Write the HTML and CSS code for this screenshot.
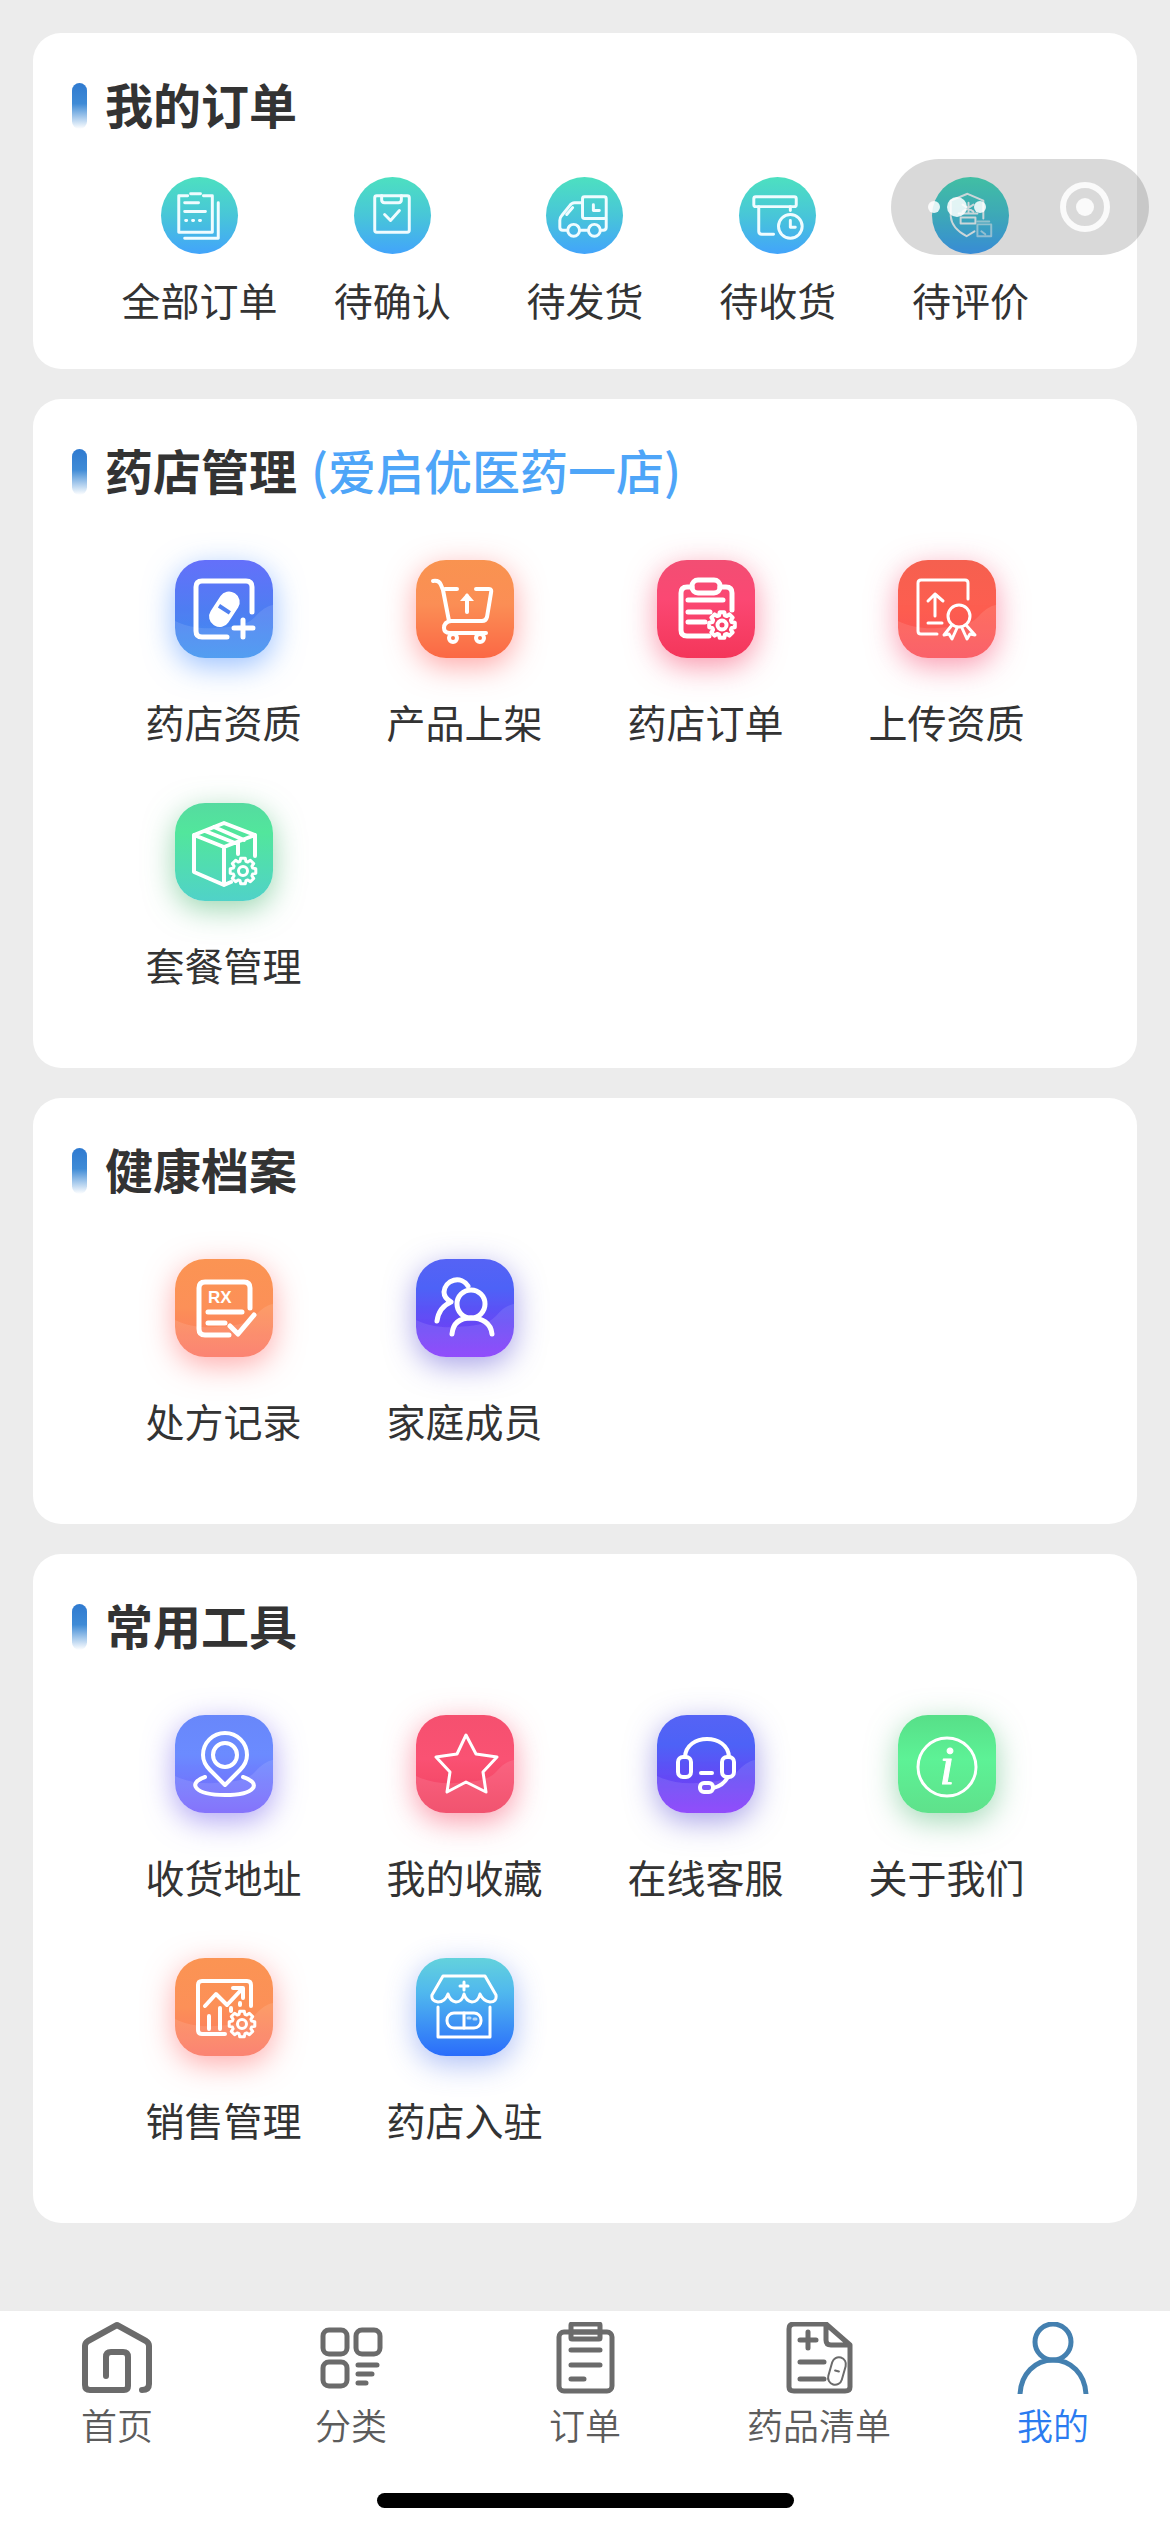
FILE: index.html
```html
<!DOCTYPE html>
<html lang="zh-CN">
<head>
<meta charset="utf-8">
<meta name="viewport" content="width=device-width, initial-scale=1">
<title>我的</title>
<link rel="stylesheet" href="styles.css">
</head>
<body>
<svg class="defs" aria-hidden="true">
  <symbol id="gear" viewBox="-16 -16 32 32" overflow="visible">
    <path d="M9.7-2.9L12.8-2.3 12.8 2.3 9.7 2.9 8.9 4.8 10.7 7.4 7.4 10.7 4.8 8.9 2.9 9.7 2.3 12.8-2.3 12.8-2.9 9.7-4.8 8.9-7.4 10.7-10.7 7.4-8.9 4.8-9.7 2.9-12.8 2.3-12.8-2.3-9.7-2.9-8.9-4.8-10.7-7.4-7.4-10.7-4.8-8.9-2.9-9.7-2.3-12.8 2.3-12.8 2.9-9.7 4.8-8.9 7.4-10.7 10.7-7.4 8.9-4.8Z"/>
    <circle r="4.5"/>
  </symbol>
  <symbol id="wave" viewBox="0 0 98 98">
    <path d="M0 61C12 67 26 69 40 68C56 67 72 66 80 57C86 50 92 46 98 45V98H0Z" fill="#fff" stroke="none"/>
  </symbol>
</svg>

<main class="page">
  <section class="card">
    <h2 class="title">我的订单</h2>
    <nav class="orders">
      <a class="order" href="#all">
        <span class="disc"><svg viewBox="0 0 78 78"><path d="M27 19H18V56H52V19H43M30 17H40M58 26V62H24M24 26H38M24 35H45"/><path d="M25 44h1M32 44h1M39 44h1"/></svg></span>
        <span>全部订单</span>
      </a>
      <a class="order" href="#confirm">
        <span class="disc"><svg viewBox="0 0 78 78"><rect x="21" y="19" width="35" height="37" rx="2"/><path d="M28 19V23q0 3 3 3H45q3 0 3-3V19M31 38L37 44 46 34"/></svg></span>
        <span>待确认</span>
      </a>
      <a class="order" href="#ship">
        <span class="disc"><svg viewBox="0 0 78 78"><path d="M37 26H29Q26 26 24 29L16 39Q14 41 14 44V51Q14 54 17 54H22M35 54H42M55 54H58Q61 54 61 51V42M21 38L27 31"/><rect x="37" y="20" width="24" height="22" rx="2"/><path d="M48 28V34H54"/><circle cx="28" cy="54" r="6"/><circle cx="49" cy="54" r="6"/></svg></span>
        <span>待发货</span>
      </a>
      <a class="order" href="#receive">
        <span class="disc"><svg viewBox="0 0 78 78"><rect x="15" y="20" width="43" height="10" rx="2"/><path d="M20 30V55Q20 58 23 58H35M52 30V34"/><circle cx="52" cy="50" r="12"/><path d="M52 44V51H57"/></svg></span>
        <span>待收货</span>
      </a>
      <a class="order" href="#review">
        <span class="disc"><svg class="fine" viewBox="0 0 78 78"><path d="M52 42V24L36 17 19 24V40Q20 52 35 60L43 55M37 26V36M31 28L42 35M42 28L31 35M27 37H46M29 41H44V47H29Z"/><path class="faint" d="M46 48H60V60H46ZM46 45H58M50 55L54 58"/></svg></span>
        <span>待评价</span>
      </a>
    </nav>
  </section>

  <section class="card">
    <h2 class="title">药店管理 <span class="store">(爱启优医药一店)</span></h2>
    <nav class="grid">
      <a class="item" href="#license">
        <span class="tile indigo"><svg viewBox="0 0 98 98"><use class="wave" href="#wave"/><path d="M52 77H27Q21 77 21 71V27Q21 21 27 21H71Q77 21 77 27V52M68 60V77M59 68H78"/><g transform="rotate(33 49 49)"><rect class="solid" x="39" y="30" width="21" height="38" rx="10"/><path class="slit" d="M43 49H56"/></g></svg></span>
        <span>药店资质</span>
      </a>
      <a class="item" href="#list">
        <span class="tile orange"><svg class="medium" viewBox="0 0 98 98"><path d="M17 21Q23 20 25 25L27 30 33 61M29 29H41M60 29H73Q76 29 75 33L71 57Q70 61 66 61H35Q28 62 28 68Q28 73 34 73H70"/><circle cx="37" cy="78" r="4"/><circle cx="64" cy="78" r="4"/><path d="M51 52V36"/><path class="solid" d="M44 41L51 33 58 41Z"/></svg></span>
        <span>产品上架</span>
      </a>
      <a class="item" href="#store-orders">
        <span class="tile rose"><svg viewBox="0 0 98 98"><path d="M35 27H30Q24 27 24 33V70Q24 76 30 76H52M63 27H69Q75 27 75 33V50M31 40H66M31 52H53M31 62H48"/><rect x="35" y="20" width="28" height="13" rx="6"/><use class="bold" href="#gear" x="49" y="49" width="32" height="32"/></svg></span>
        <span>药店订单</span>
      </a>
      <a class="item" href="#upload">
        <span class="tile red"><svg class="thin" viewBox="0 0 98 98"><use class="wave" href="#wave"/><path d="M39 74H23Q20 74 20 71V23Q20 20 23 20H67Q70 20 70 23V39M37 56V34M30 41L37 34 45 41M30 63H44"/><circle cx="61" cy="56" r="11"/><path d="M54 65L46 75 51 74 54 79 59 68M68 65L77 75 72 74 69 79 64 68"/></svg></span>
        <span>上传资质</span>
      </a>
      <a class="item" href="#package">
        <span class="tile mint"><svg class="medium" viewBox="0 0 98 98"><path d="M56 79L49 82 19 69V32L49 20 80 32V53M19 32L49 44 80 32M49 44V82M39 24L69 37M30 28L60 40M63 39V51"/><use href="#gear" x="52" y="52" width="32" height="32"/></svg></span>
        <span>套餐管理</span>
      </a>
    </nav>
  </section>

  <section class="card">
    <h2 class="title">健康档案</h2>
    <nav class="grid">
      <a class="item" href="#rx">
        <span class="tile peach"><svg viewBox="0 0 98 98"><use class="wave" href="#wave"/><path d="M54 76H30Q24 76 24 70V29Q24 23 30 23H69Q75 23 75 29V49M33 53H67M33 64H50M55 67L63 75 79 56"/><text class="rx" x="33" y="44">RX</text></svg></span>
        <span>处方记录</span>
      </a>
      <a class="item" href="#family">
        <span class="tile violet"><svg viewBox="0 0 98 98"><use class="wave" href="#wave"/><path d="M52 27A13 13 0 0 0 28 33Q28 39 35 43Q23 48 21 62"/><circle cx="55" cy="45" r="14"/><path d="M36 75C37 64 44 59 55 59S75 64 76 75"/></svg></span>
        <span>家庭成员</span>
      </a>
    </nav>
  </section>

  <section class="card">
    <h2 class="title">常用工具</h2>
    <nav class="grid">
      <a class="item" href="#address">
        <span class="tile iris"><svg class="medium" viewBox="0 0 98 98"><use class="wave" href="#wave"/><path d="M50 70L35 55Q28 48 28 40A22 22 0 0 1 72 40Q72 48 65 55ZM30 62C12 68 19 80 50 80S87 68 68 62"/><circle cx="50" cy="40" r="12"/></svg></span>
        <span>收货地址</span>
      </a>
      <a class="item" href="#favorites">
        <span class="tile pink"><svg class="thin" viewBox="0 0 98 98"><use class="wave" href="#wave"/><path d="M50 20L60 39 81 42 67 57 70 77 50 67 31 77 34 57 20 42 41 39Z"/></svg></span>
        <span>我的收藏</span>
      </a>
      <a class="item" href="#service">
        <span class="tile violet"><svg class="medium" viewBox="0 0 98 98"><use class="wave" href="#wave"/><path d="M28 42C29 18 71 18 72 42M44 58H55M71 62Q66 71 56 73"/><rect x="21" y="42" width="13" height="20" rx="5"/><rect x="65" y="42" width="12" height="20" rx="5"/><rect x="43" y="68" width="13" height="9" rx="4"/></svg></span>
        <span>在线客服</span>
      </a>
      <a class="item" href="#about">
        <span class="tile green"><svg class="thin" viewBox="0 0 98 98"><circle cx="49" cy="52" r="29"/><text class="info" x="49" y="69">i</text></svg></span>
        <span>关于我们</span>
      </a>
      <a class="item" href="#sales">
        <span class="tile peach"><svg class="medium" viewBox="0 0 98 98"><use class="wave" href="#wave"/><path d="M50 76H27Q23 76 23 72V27Q23 23 27 23H72Q76 23 76 27V48M30 48L41 36 52 47 67 31M58 30H68V40M34 58V71M45 50V71M56 50V53M65 45V47"/><use href="#gear" x="51" y="50" width="32" height="32"/></svg></span>
        <span>销售管理</span>
      </a>
      <a class="item" href="#join">
        <span class="tile sky"><svg class="thin" viewBox="0 0 98 98"><path d="M27 18H69L80 37Q81 44 74 44 67 43 64 36 62 44 56 44 50 43 48 36 46 44 40 44 34 43 32 36 29 44 22 44 15 43 16 37ZM22 49V79H74V49M48 24V32M44 28H52"/><rect x="31" y="55" width="34" height="15" rx="7"/><path d="M48 55V70"/><path class="faint" d="M52 60H54M58 61H60"/></svg></span>
        <span>药店入驻</span>
      </a>
    </nav>
  </section>
</main>

<div class="capsule">
  <button class="capsule-btn" type="button" aria-label="更多"><svg width="60" height="50" viewBox="0 0 60 50"><circle cx="7" cy="25" r="6"/><circle cx="30" cy="25" r="10"/><circle cx="53" cy="25" r="6"/></svg></button>
  <button class="capsule-btn" type="button" aria-label="关闭"><svg width="50" height="50" viewBox="0 0 50 50"><circle class="ring" cx="25" cy="25" r="22"/><circle cx="25" cy="25" r="9"/></svg></button>
</div>

<footer class="tabbar">
  <nav class="tabs">
    <a class="tab" href="#home"><svg viewBox="0 0 72 72"><path class="heavy" d="M61 68Q68 68 68 62V24Q68 21 65 19L36 3 7 19Q4 21 4 24V63Q4 68 9 68H43Q47 68 47 64V35Q47 30 42 30H30Q25 30 25 35V54"/></svg><span>首页</span></a>
    <a class="tab" href="#category"><svg viewBox="0 0 72 72"><rect x="8" y="8" width="24" height="24" rx="6"/><rect x="41" y="8" width="24" height="24" rx="6"/><rect x="8" y="40" width="24" height="24" rx="6"/><path d="M43 43H62M43 52H57M43 61H51"/></svg><span>分类</span></a>
    <a class="tab" href="#orders"><svg viewBox="0 0 72 72"><rect x="10" y="10" width="53" height="59" rx="5"/><rect x="22" y="2" width="29" height="15" rx="1"/><path d="M22 10H51M22 28H51M22 43H51M22 57H35"/></svg><span>订单</span></a>
    <a class="tab" href="#medicine"><svg viewBox="0 0 72 72"><path d="M43 2H11Q6 2 6 7V65Q6 69 11 69H62Q67 69 67 65V23ZM43 2V18Q43 23 48 23H67M25 10V26M17 18H33M17 40H41M17 57H41"/><g class="hair" transform="rotate(16 54 49)"><rect x="47" y="35" width="14" height="28" rx="7"/><path d="M52 49H56"/></g></svg><span>药品清单</span></a>
    <a class="tab active" href="#mine" aria-current="page"><svg viewBox="0 0 72 72"><circle cx="36" cy="20" r="18"/><path d="M3 72C4 52 18 38 36 38S68 52 69 72"/></svg><span>我的</span></a>
  </nav>
  <div class="home-indicator"></div>
</footer>
</body>
</html>
```
FILE: styles.css
```css
* {
  box-sizing: border-box;
}

body {
  margin: 0;
  min-height: 100vh;
  display: flex;
  flex-direction: column;
  background: #ececec;
  color: #333;
  font-family: "Noto Sans CJK SC", sans-serif;
}

a {
  color: inherit;
  text-decoration: none;
}

svg {
  display: block;
  fill: none;
  stroke-linecap: round;
  stroke-linejoin: round;
}

.defs {
  position: absolute;
  width: 0;
  height: 0;
}

.page {
  display: flex;
  flex-direction: column;
  gap: 30px;
  padding: 33px;
}

/* Cards */
.card {
  background: #fff;
  border-radius: 28px;
  padding: 50px 70px 0;
}

.title {
  display: flex;
  align-items: flex-start;
  gap: 14px;
  margin: 0 0 0 -31px;
  font-size: 48px;
  font-weight: 700;
  line-height: 40px;
}

.title::before {
  content: "";
  width: 15px;
  height: 46px;
  margin-right: 4px;
  border-radius: 8px;
  background: linear-gradient(#2f7ad0, #3f8bd6 45%, #fff);
}

.store {
  color: #4ea5f8;
  font-weight: 500;
}

/* Order status row */
.orders {
  display: grid;
  grid-template-columns: repeat(5, 1fr);
  margin-top: 48px;
  padding-bottom: 42px;
}

.order,
.item {
  display: flex;
  flex-direction: column;
  align-items: center;
  font-size: 39px;
  line-height: 56px;
  white-space: nowrap;
}

.order {
  gap: 17px;
}

.disc {
  width: 77px;
  height: 77px;
  border-radius: 50%;
  background: linear-gradient(#4de0c0, #48c6d8 50%, #42a4fb);
}

.disc svg {
  stroke: #effcff;
  stroke-width: 3;
}

.disc .fine {
  stroke-width: 2;
}

.faint {
  opacity: 0.6;
}

/* Feature grid */
.grid {
  display: grid;
  grid-template-columns: repeat(4, 1fr);
  row-gap: 54px;
  margin-top: 65px;
  padding-bottom: 76px;
}

.item {
  gap: 35px;
}

.tile {
  width: 98px;
  height: 98px;
  border-radius: 30px;
  overflow: hidden;
}

.tile svg {
  stroke: #fff;
  stroke-width: 5;
}

.tile .medium {
  stroke-width: 4;
}

.tile .thin {
  stroke-width: 3;
}

.tile use {
  stroke-width: 3;
}

.tile .bold {
  stroke-width: 4;
}

.wave {
  opacity: 0.1;
}

.solid {
  fill: #fff;
  stroke: none;
}

.slit {
  stroke: #4f80f0;
  stroke-width: 4;
  stroke-linecap: butt;
}

.rx,
.info {
  fill: #fff;
  stroke: none;
}

.rx {
  font: bold 17px "Liberation Sans", sans-serif;
}

.info {
  font: italic 54px "Liberation Serif", serif;
  stroke: #fff;
  stroke-width: 1;
  text-anchor: middle;
}

.indigo {
  background: linear-gradient(#6470fa, #4f7df2 50%, #3f93f0);
  box-shadow: 0 8px 30px rgba(70, 140, 255, 0.55);
}

.orange {
  background: linear-gradient(#f99350, #fb8e55 45%, #fb6845);
  box-shadow: 0 8px 30px rgba(255, 80, 80, 0.5);
}

.rose {
  background: linear-gradient(#f24e73, #fb4873 40%, #f4365a);
  box-shadow: 0 8px 30px rgba(245, 60, 100, 0.55);
}

.red {
  background: linear-gradient(#f5604f, #fd5e50 50%, #fa5059);
  box-shadow: 0 8px 30px rgba(245, 70, 110, 0.55);
}

.mint {
  background: linear-gradient(#55dba0, #52e69c 30%, #50d2c8);
  box-shadow: 0 8px 30px rgba(70, 180, 110, 0.55);
}

.peach {
  background: linear-gradient(#fb9453, #fc9058 50%, #fb7663);
  box-shadow: 0 8px 30px rgba(255, 90, 90, 0.5);
}

.violet {
  background: linear-gradient(#5563f5, #4d62f7 30%, #6549f5 65%, #8538fb);
  box-shadow: 0 8px 30px rgba(80, 70, 210, 0.5);
}

.iris {
  background: linear-gradient(#6887fa, #6b8bff 40%, #7864fb);
  box-shadow: 0 8px 30px rgba(110, 90, 235, 0.55);
}

.pink {
  background: linear-gradient(#f5506f, #fa5273 45%, #f0405f);
  box-shadow: 0 8px 30px rgba(245, 70, 100, 0.55);
}

.green {
  background: linear-gradient(#57df88, #5df296 45%, #5fe18b);
  box-shadow: 0 8px 30px rgba(70, 180, 110, 0.5);
}

.sky {
  background: linear-gradient(#63d2dc, #50b8ee 35%, #2a6cfb);
  box-shadow: 0 8px 30px rgba(70, 110, 235, 0.45);
}

/* Floating mini-program controls */
.capsule {
  position: fixed;
  top: 159px;
  right: 21px;
  width: 258px;
  height: 96px;
  padding: 0 39px 0 36px;
  display: flex;
  align-items: center;
  justify-content: space-between;
  border-radius: 48px;
  background: rgba(0, 0, 0, 0.15);
}

.capsule-btn {
  padding: 0;
  border: 0;
  background: none;
}

.capsule svg {
  fill: rgba(255, 255, 255, 0.85);
}

.capsule .ring {
  fill: none;
  stroke: rgba(255, 255, 255, 0.85);
  stroke-width: 6;
}

/* Bottom tab bar */
.tabbar {
  position: sticky;
  bottom: 0;
  margin-top: auto;
  padding: 11px 0 24px;
  background: #fff;
}

.tabs {
  display: grid;
  grid-template-columns: repeat(5, 1fr);
}

.tab {
  display: flex;
  flex-direction: column;
  align-items: center;
  gap: 5px;
  color: #5c5c5c;
  font-size: 36px;
  line-height: 50px;
  font-weight: 350;
}

.tab svg {
  width: 72px;
  height: 72px;
  stroke: #6b6b6b;
  stroke-width: 5;
}

.tab .heavy {
  stroke-width: 6;
}

.tab .hair {
  stroke-width: 2;
}

.tab.active {
  color: #2a7bf0;
}

.tab.active svg {
  stroke: #4480b0;
}

.home-indicator {
  width: 417px;
  height: 15px;
  margin: 44px auto 0;
  border-radius: 8px;
  background: #000;
}
```
